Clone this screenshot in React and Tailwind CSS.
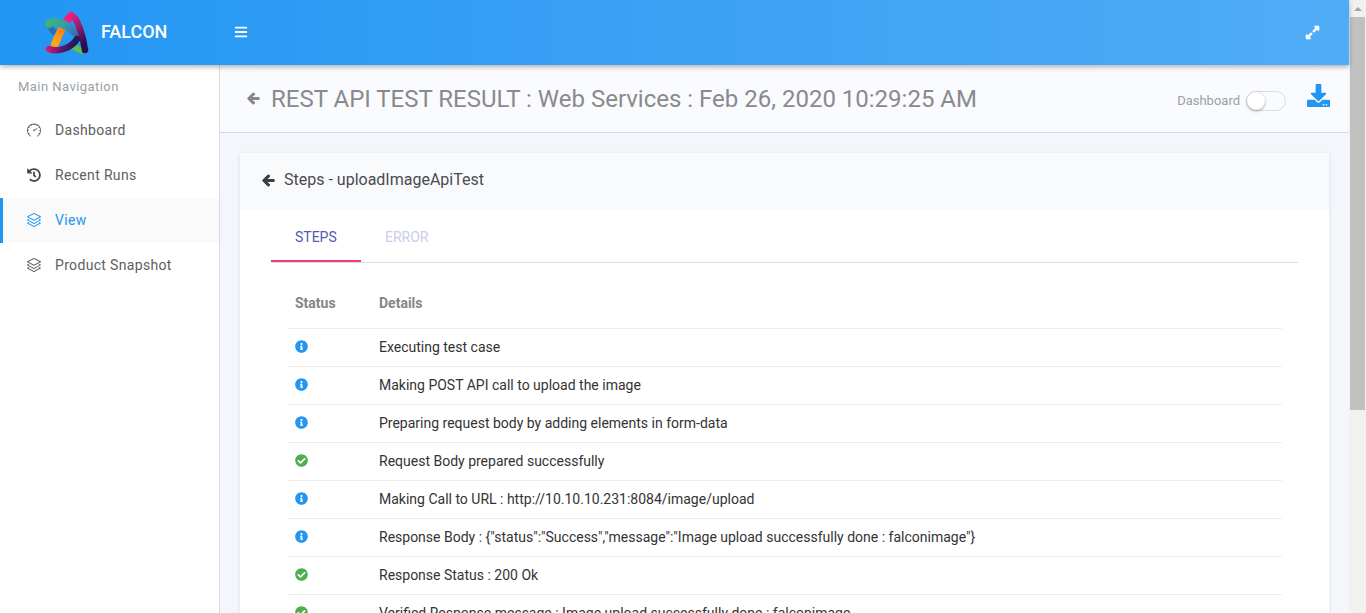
import React from "react";
import {
  FaArrowLeft,
  FaBars,
  FaCheckCircle,
  FaDownload,
  FaExpandAlt,
  FaHistory,
  FaInfoCircle,
} from "react-icons/fa";
import { SlLayers, SlSpeedometer } from "react-icons/sl";

const steps = [
  ["info", "Executing test case"],
  ["info", "Making POST API call to upload the image"],
  ["info", "Preparing request body by adding elements in form-data"],
  ["ok", "Request Body prepared successfully"],
  ["info", "Making Call to URL : http://10.10.10.231:8084/image/upload"],
  ["info", 'Response Body : {"status":"Success","message":"Image upload successfully done : falconimage"}'],
  ["ok", "Response Status : 200 Ok"],
  ["ok", "Verified Response message : Image upload successfully done : falconimage"],
];

function Logo() {
  return (
    <svg width="46" height="44" viewBox="0 0 46 44" fill="none">
      <defs>
        <linearGradient id="a" x1="0" y1="0" x2="1" y2="0.4">
          <stop offset="0" stopColor="#3fb56f" />
          <stop offset="0.55" stopColor="#2f9ab5" />
          <stop offset="1" stopColor="#3a6fb8" />
        </linearGradient>
        <linearGradient id="b" x1="0" y1="0" x2="0.3" y2="1">
          <stop offset="0" stopColor="#ee1c84" />
          <stop offset="0.5" stopColor="#8c1a6c" />
          <stop offset="1" stopColor="#25124f" />
        </linearGradient>
        <linearGradient id="c" x1="0" y1="0" x2="1" y2="0.1">
          <stop offset="0" stopColor="#e0176f" />
          <stop offset="0.55" stopColor="#5a1a70" />
          <stop offset="1" stopColor="#1d1a55" />
        </linearGradient>
        <linearGradient id="d" x1="0.7" y1="0" x2="0.2" y2="1">
          <stop offset="0" stopColor="#ef1f7d" />
          <stop offset="0.45" stopColor="#f5821f" />
          <stop offset="1" stopColor="#fba81b" />
        </linearGradient>
      </defs>
      <path d="M6 14 C6 18 11 22 16 25" stroke="#2a6db0" strokeWidth="6" strokeLinecap="round" />
      <path d="M25 7 C19 14 15 23 11 33" stroke="url(#d)" strokeWidth="8" strokeLinecap="round" />
      <path d="M5 13 C13 8 27 15 35 26" stroke="url(#a)" strokeWidth="8" strokeLinecap="round" />
      <path d="M39 40 C35 39 31 37 28 34" stroke="#5cbf4f" strokeWidth="6" strokeLinecap="round" />
      <path d="M5 38 C15 42 28 36 33 28" stroke="url(#c)" strokeWidth="6.5" strokeLinecap="round" />
      <path d="M27 4 C33 6 39 24 41 39" stroke="url(#b)" strokeWidth="6.5" strokeLinecap="round" />
    </svg>
  );
}

function NavItem({ icon, label, active }) {
  return (
    <div
      className={`flex h-[45px] items-center border-l-[3px] pl-[24px] ${
        active ? "border-[#2196f3] bg-[#fafafa] text-[#2196f3]" : "border-transparent text-[#5e5e5e]"
      }`}
    >
      <span className="mb-[2px] flex w-[28px] text-[14px]">{icon}</span>
      <span className="text-[14px] tracking-[0.33px]">{label}</span>
    </div>
  );
}

export default function App() {
  return (
    <div className="flex h-[613px] w-full overflow-hidden bg-[#f4f6fb] font-['Roboto',sans-serif]">
      <div className="flex min-w-0 flex-1 flex-col">
        {/* Top bar */}
        <header className="relative z-10 flex h-[65px] shrink-0 items-center bg-gradient-to-r from-[#2196f3] to-[#4facf7] text-white shadow-[0_2px_5px_rgba(0,0,0,0.3)]">
          <div className="flex w-[234px] items-center pl-[44px]">
            <Logo />
            <span className="mb-[2px] ml-[11px] text-[18px] font-medium leading-none">FALCON</span>
          </div>
          <FaBars className="mb-[2px] text-[14px]" />
          <FaExpandAlt className="mb-[1px] ml-auto mr-[29px] text-[15px] stroke-current stroke-[20]" />
        </header>

        <div className="flex min-h-0 flex-1">
          {/* Sidebar */}
          <aside className="w-[220px] shrink-0 border-r border-[#d8dce0] bg-white">
            <p className="pb-[13px] pl-[18px] pt-[14px] text-[13px] leading-[16px] tracking-[0.45px] text-[#99a1a8]">
              Main Navigation
            </p>
            <NavItem icon={<SlSpeedometer />} label="Dashboard" />
            <NavItem icon={<FaHistory className="text-[#444]" />} label="Recent Runs" />
            <NavItem icon={<SlLayers />} label="View" active />
            <NavItem icon={<SlLayers />} label="Product Snapshot" />
          </aside>

          {/* Main */}
          <main className="min-w-0 flex-1">
            <div className="flex h-[68px] items-center border-b border-[#cfdde8] bg-[#fafbfe] pl-[27px] pr-[19px]">
              <FaArrowLeft className="text-[13px] text-[#888] stroke-current stroke-[40]" />
              <h1 className="ml-[11px] text-[24px] leading-none text-[#8a8a8a]">
                REST API TEST RESULT : Web Services : Feb 26, 2020 10:29:25 AM
              </h1>
              <span className="ml-auto mt-[5px] text-[13px] text-[#9aa1a6]">Dashboard</span>
              <span className="ml-[6px] mt-[4px] flex h-[20px] w-[40px] items-center rounded-full border border-[#dcdcdc] bg-[#fafbfe]">
                <span className="h-[18px] w-[18px] rounded-full bg-white shadow-[0_1px_3px_rgba(0,0,0,0.35)]" />
              </span>
              <FaDownload className="mb-[6px] ml-[21px] text-[23px] text-[#2196f3]" />
            </div>

            <section className="mx-[20px] mt-[20px] rounded-[3px] bg-white shadow-[0_1px_4px_rgba(0,0,0,0.1)]">
              <div className="flex h-[56px] items-center bg-[#f9fafc] pb-[2px] pl-[22px]">
                <FaArrowLeft className="text-[13px] text-[#3d3d45] stroke-current stroke-[40]" />
                <h2 className="ml-[9px] text-[16px] text-[#4a4a52]">Steps - uploadImageApiTest</h2>
              </div>

              <div className="px-[31px]">
                <div className="flex h-[54px] border-b border-[#dedede] text-[14px] leading-[56px]">
                  <span className="h-[53px] w-[90px] border-b-2 border-[#f4387d] pl-[24px] text-[#4f5bb5]">STEPS</span>
                  <span className="pl-[24px] text-[#c9cdeb]">ERROR</span>
                </div>

                <div className="mx-[16px] mt-[21px]">
                  <div className="flex h-[45px] items-center border-b border-[#eeeeee] pb-[5px] text-[14px] font-bold text-[#858585]">
                    <span className="w-[92px] pl-[8px]">Status</span>
                    <span>Details</span>
                  </div>
                  {steps.map(([status, text], i) => (
                    <div key={i} className="flex h-[38px] items-center border-b border-[#eeeeee] text-[14px] text-[#333333]">
                      <span className="mb-[2px] flex w-[92px] pl-[8px] text-[13px]">
                        {status === "ok" ? (
                          <FaCheckCircle className="text-[#4caf50]" />
                        ) : (
                          <FaInfoCircle className="text-[#2196f3]" />
                        )}
                      </span>
                      <span>{text}</span>
                    </div>
                  ))}
                </div>
              </div>
            </section>
          </main>
        </div>
      </div>

      {/* Scrollbar */}
      <div className="flex w-[17px] shrink-0 flex-col bg-[#f1f1f1]">
        <div className="flex h-[17px] items-center justify-center">
          <span className="h-0 w-0 border-x-[4px] border-b-[4px] border-x-transparent border-b-[#a3a3a3]" />
        </div>
        <div className="mx-px h-[393px] bg-[#c1c1c1]" />
      </div>
    </div>
  );
}
